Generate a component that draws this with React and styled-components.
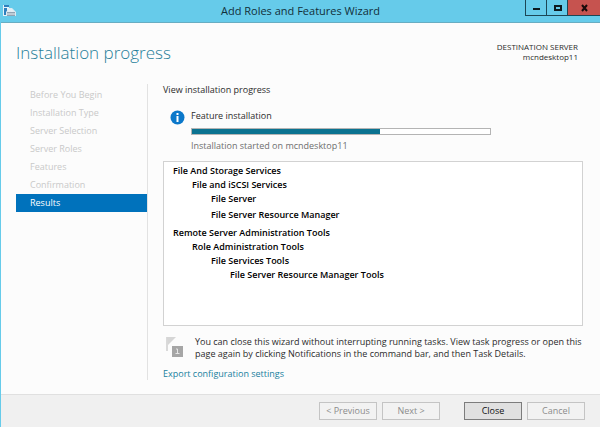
import styled, { createGlobalStyle } from "styled-components";

const GlobalStyle = createGlobalStyle`
  * {
    box-sizing: border-box;
  }

  body {
    margin: 0;
    background: #fcfcfc;
    color: #2b2b2b;
    font-family: "Open Sans", "Noto Sans", sans-serif;
    font-size: 9px;
    line-height: 12px;
  }

  button {
    font: inherit;
  }
`;

const Window = styled.div`
  display: flex;
  flex-direction: column;
  min-height: 100vh;
  border-left: 1px solid #66cbea;
`;

const TitleBar = styled.header`
  display: grid;
  grid-template-columns: 75px 1fr 75px;
  height: 23px;
  background: #66cbea;
  border-bottom: 1px solid #68adc2;
`;

const AppIcon = styled.svg`
  width: 14px;
  height: 14px;
  margin: 4px 0 0 1px;
`;

const WindowTitle = styled.div`
  color: #12303a;
  font-size: 11px;
  line-height: 22px;
  text-align: center;
`;

const WindowButtons = styled.div`
  display: grid;
  grid-template-columns: 21px 21px 1fr;
  height: 16px;
`;

const WindowButton = styled.button`
  display: flex;
  align-items: center;
  justify-content: center;
  padding: 0;
  border: 0 solid #1c4756;
  border-width: 0 0 1px 1px;
  background: ${(props) => (props.$danger ? "#c6534f" : "#66cbea")};
`;

const Heading = styled.div`
  display: flex;
  justify-content: space-between;
  padding: 17px 22px 0 15px;
  height: 61px;
`;

const PageTitle = styled.h1`
  margin: 0;
  color: #27809a;
  font-size: 17px;
  font-weight: 300;
  line-height: 26px;
`;

const Destination = styled.div`
  font-size: 8px;
  line-height: 10px;
  text-align: right;
  padding-top: 2px;
`;

const Body = styled.div`
  display: flex;
  flex: 1;
  padding: 0 17px 14px 15px;
`;

const Steps = styled.nav`
  width: 132px;
  padding-top: 2px;
  border-right: 1px solid #e2e2e2;
`;

const Step = styled.div`
  height: 18px;
  padding-left: 14px;
  line-height: 18px;
  color: ${(props) => (props.$active ? "#ffffff" : "#c9c9c9")};
  background: ${(props) => (props.$active ? "#0072bc" : "transparent")};
`;

const Content = styled.main`
  display: flex;
  flex: 1;
  flex-direction: column;
  min-width: 0;
  padding-left: 15px;
`;

const Status = styled.section`
  display: flex;
  gap: 6px;
  padding: 14px 0 0 7px;
`;

const InfoIcon = styled.svg`
  flex: none;
  width: 15px;
  height: 15px;
`;

const StatusText = styled.div`
  flex: 1;
  color: ${(props) => (props.$muted ? "#6e6e6e" : "inherit")};
`;

const Progress = styled.progress`
  display: block;
  appearance: none;
  width: 100%;
  max-width: 300px;
  height: 7px;
  margin: 6px 0 5px;
  border: 1px solid #b4b4b4;
  background: #ffffff;

  &::-webkit-progress-bar {
    background: #ffffff;
  }

  &::-webkit-progress-value {
    background: #0b7391;
  }
`;

const FeatureBox = styled.div`
  flex: 1;
  margin-top: 9px;
  padding: 2px 9px;
  border: 1px solid #d2d2d2;
  background: #ffffff;
  color: #000000;
  font-weight: 600;
  line-height: 14px;
`;

const FeatureList = styled.ul`
  display: grid;
  gap: ${(props) => props.$gap || 0}px;
  margin: 0;
  padding-left: ${(props) => (props.$root ? 0 : 19)}px;
  list-style: none;
`;

const Notice = styled.div`
  display: flex;
  gap: 12px;
  padding: 10px 0 0 3px;
`;

const NoticeIcon = styled.svg`
  flex: none;
  width: 17px;
  height: 21px;
  margin-top: 1px;
`;

const NoticeText = styled.p`
  margin: 0;
`;

const ExportLink = styled.a`
  align-self: flex-start;
  margin-top: 8px;
  color: #19809e;
  text-decoration: none;
`;

const Footer = styled.footer`
  display: flex;
  justify-content: flex-end;
  gap: 5px;
  height: 33px;
  padding: 7px 15px 0;
  border-top: 1px solid #e0e0e0;
  background: #f0f0f0;
`;

const Button = styled.button`
  width: 58px;
  height: 18px;
  padding: 0;
  line-height: 14px;
  color: #101010;
  border: 1px solid #7c7c7c;
  background: #e0e0e0;

  &:disabled {
    color: #8c8c8c;
    border-color: #c4c4c4;
    background: #f2f2f2;
  }
`;

const ButtonPair = styled.div`
  display: flex;
  gap: 5px;
  margin-right: 19px;
`;

const steps = [
  "Before You Begin",
  "Installation Type",
  "Server Selection",
  "Server Roles",
  "Features",
  "Confirmation",
  "Results",
];

const features = [
  {
    name: "File And Storage Services",
    items: [
      {
        name: "File and iSCSI Services",
        gap: 2,
        items: [{ name: "File Server" }, { name: "File Server Resource Manager" }],
      },
    ],
  },
  {
    name: "Remote Server Administration Tools",
    items: [
      {
        name: "Role Administration Tools",
        items: [
          {
            name: "File Services Tools",
            items: [{ name: "File Server Resource Manager Tools" }],
          },
        ],
      },
    ],
  },
];

function Features({ items, gap, root }) {
  return (
    <FeatureList $gap={gap} $root={root}>
      {items.map((item) => (
        <li key={item.name}>
          {item.name}
          {item.items && <Features items={item.items} gap={item.gap} />}
        </li>
      ))}
    </FeatureList>
  );
}

export default function App() {
  return (
    <Window>
      <GlobalStyle />
      <TitleBar>
        <AppIcon viewBox="0 0 14 14">
          <path d="M1 1h6v11H1z" fill="#e4f3fa" />
          <path d="M2 1h5v2H2zM2 4h3v7H2z" fill="#2f80bd" />
          <path d="M4 12V8l3-4h3l4 4v4z" fill="#dcebf3" />
          <path d="M5 8h8v4H5z" fill="#8fa3b3" />
          <path d="M5 10h8M7 8V6h3v2" stroke="#e9f1f6" fill="none" />
        </AppIcon>
        <WindowTitle>Add Roles and Features Wizard</WindowTitle>
        <WindowButtons>
          <WindowButton aria-label="Minimize">
            <svg width="9" height="9" viewBox="0 0 9 9">
              <path d="M1 5h7v2H1z" fill="#0c1a20" />
            </svg>
          </WindowButton>
          <WindowButton aria-label="Maximize">
            <svg width="9" height="9" viewBox="0 0 9 9">
              <path d="M2 3h6v4H2z" fill="none" stroke="#0c1a20" strokeWidth="2" />
            </svg>
          </WindowButton>
          <WindowButton aria-label="Close window" $danger>
            <svg width="9" height="9" viewBox="0 0 9 9">
              <path d="M2 2l5 6M7 2L2 8" stroke="#1a0b0b" strokeWidth="2" />
            </svg>
          </WindowButton>
        </WindowButtons>
      </TitleBar>
      <Heading>
        <PageTitle>Installation progress</PageTitle>
        <Destination>
          <div>DESTINATION SERVER</div>
          <div>mcndesktop11</div>
        </Destination>
      </Heading>
      <Body>
        <Steps>
          {steps.map((step) => (
            <Step key={step} $active={step === "Results"}>
              {step}
            </Step>
          ))}
        </Steps>
        <Content>
          <div>View installation progress</div>
          <Status>
            <InfoIcon viewBox="0 0 15 15">
              <circle cx="7.5" cy="7.5" r="7" fill="#0b78ca" />
              <path d="M6.5 3h2v2h-2zM6.5 6h2v6h-2z" fill="#ffffff" />
            </InfoIcon>
            <StatusText>
              <label htmlFor="install-progress">Feature installation</label>
              <Progress id="install-progress" max="100" value="63" />
              <StatusText $muted>Installation started on mcndesktop11</StatusText>
            </StatusText>
          </Status>
          <FeatureBox>
            <Features items={features} gap={4} root />
          </FeatureBox>
          <Notice>
            <NoticeIcon viewBox="0 0 17 21">
              <path d="M1 0v14" stroke="#dadada" strokeWidth="2" />
              <path d="M1 0h9L6 4 2 8z" fill="#d6d6d6" />
              <path d="M6 9h11v11H6z" fill="#a6a6a6" />
              <path d="M10 12h1.5v4M9.5 16.5h4" fill="none" stroke="#e6e6e6" />
            </NoticeIcon>
            <NoticeText>
              You can close this wizard without interrupting running tasks. View task progress or open this
              page again by clicking Notifications in the command bar, and then Task Details.
            </NoticeText>
          </Notice>
          <ExportLink href="#export">Export configuration settings</ExportLink>
        </Content>
      </Body>
      <Footer>
        <ButtonPair>
          <Button disabled>&lt; Previous</Button>
          <Button disabled>Next &gt;</Button>
        </ButtonPair>
        <Button>Close</Button>
        <Button disabled>Cancel</Button>
      </Footer>
    </Window>
  );
}
